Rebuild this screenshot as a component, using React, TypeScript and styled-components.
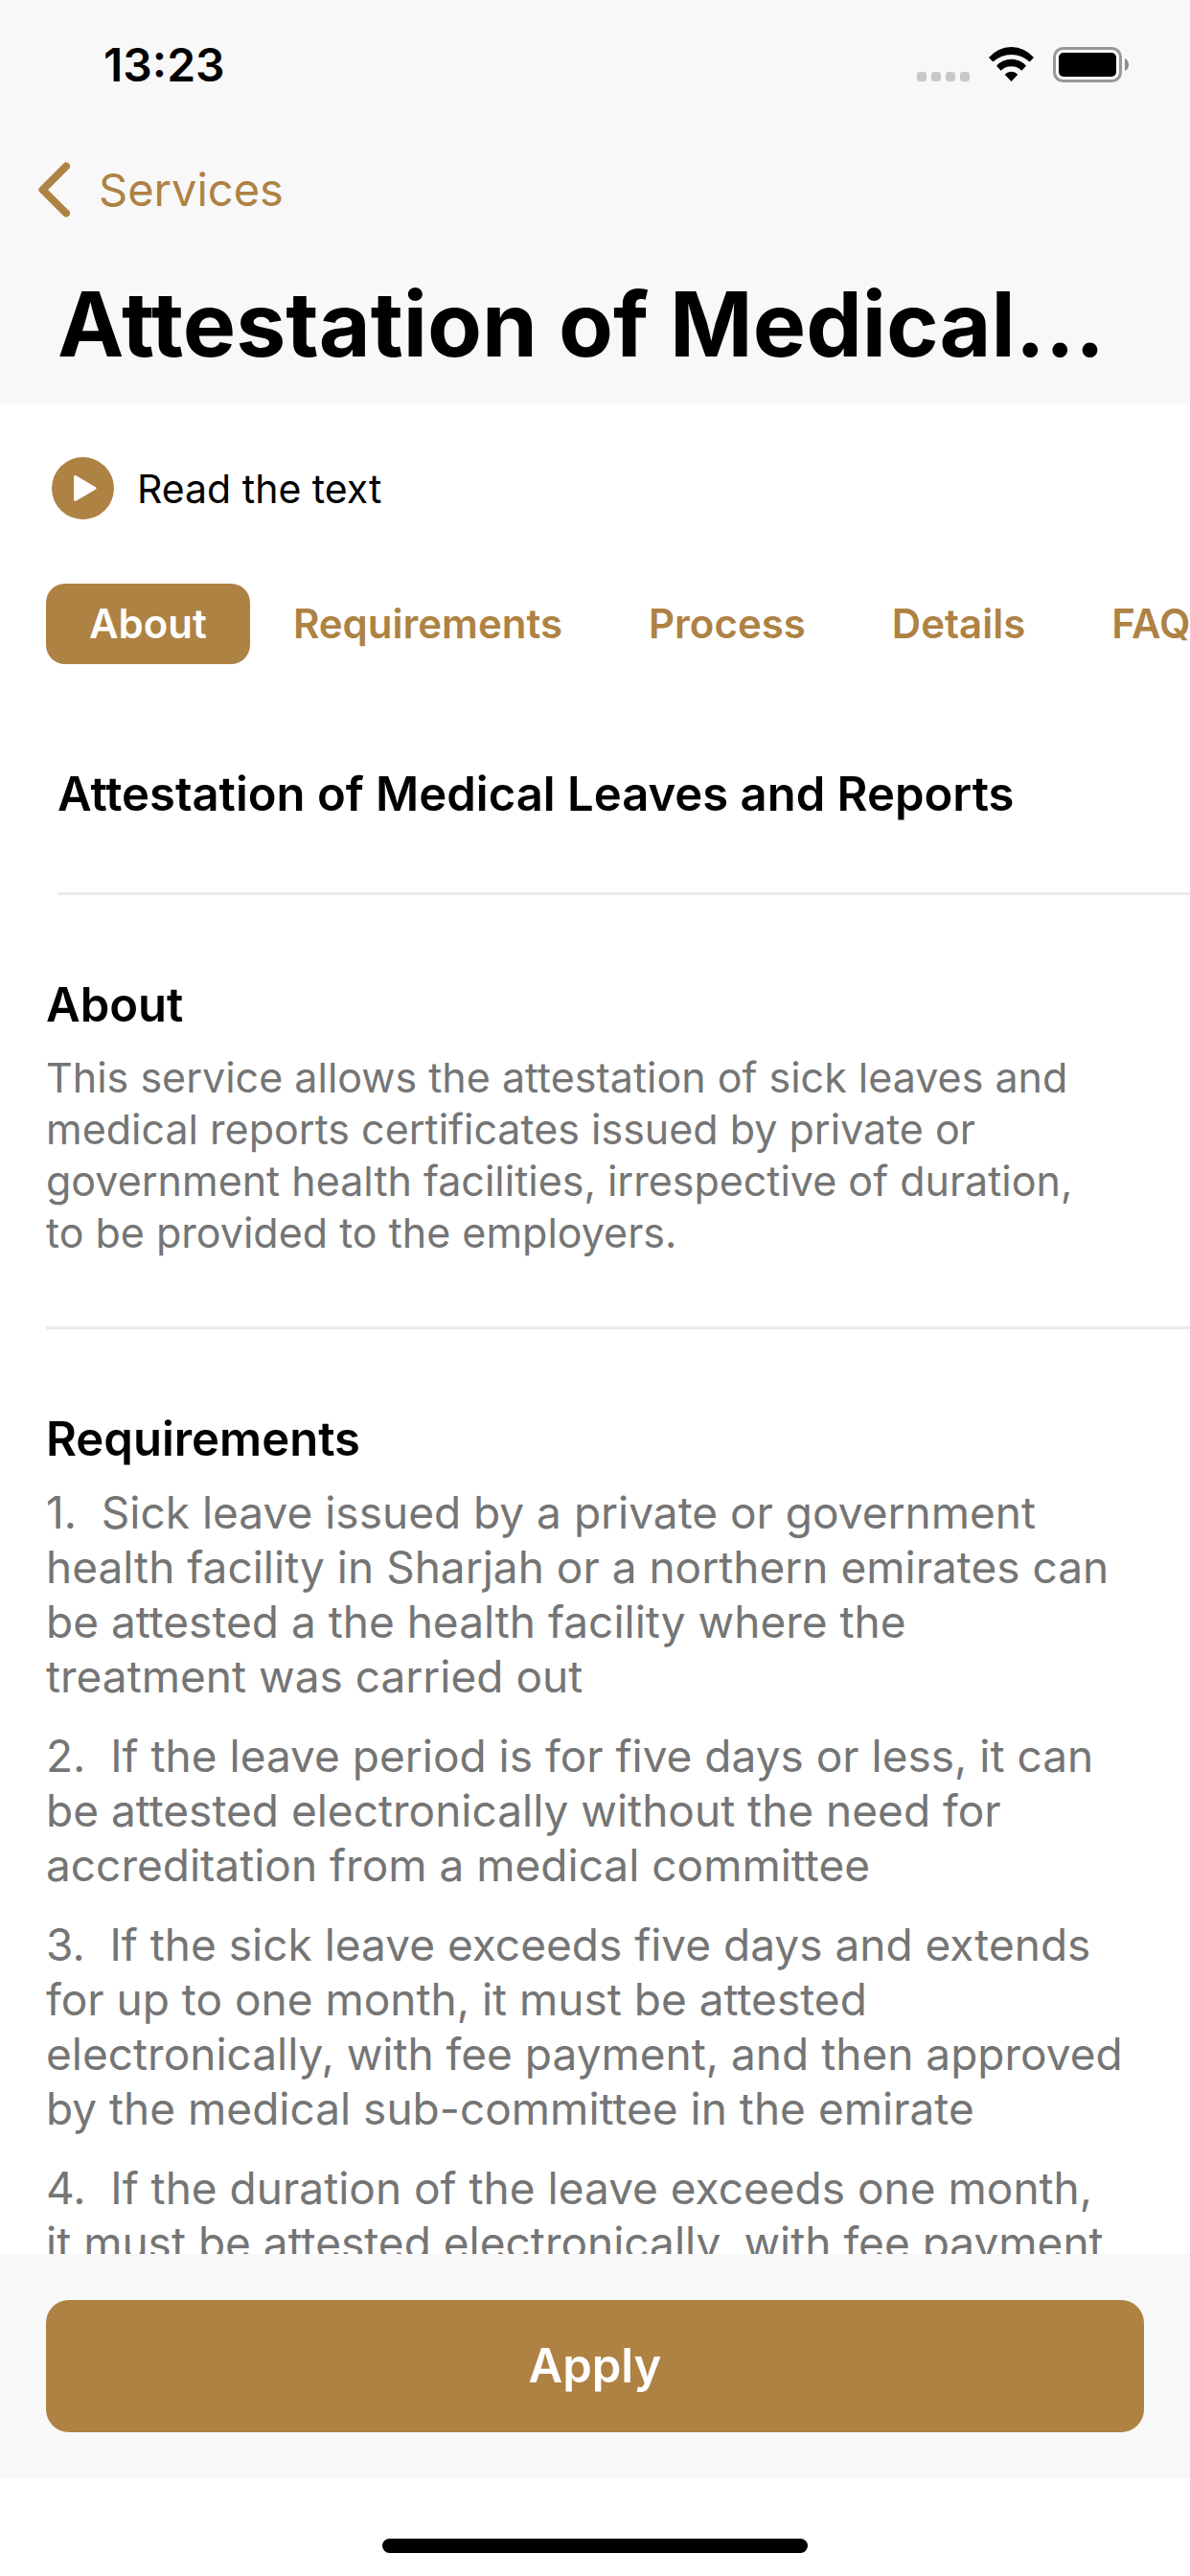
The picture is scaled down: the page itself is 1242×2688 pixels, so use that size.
import React, { useState } from "react";
import styled, { createGlobalStyle } from "styled-components";

const gold = "#ae8243";
const bar = "#f8f8f8";

const Global = createGlobalStyle`
  *, *::before, *::after { box-sizing: border-box; }
  body { margin: 0; background: #fff; }
  h1, h2, p, ol { margin: 0; padding: 0; font-weight: inherit; font-size: inherit; }
  button { font: inherit; border: 0; background: none; padding: 0; cursor: pointer; }
`;

const Screen = styled.div`
  height: 100vh;
  display: flex;
  flex-direction: column;
  overflow: hidden;
  background: #fff;
  color: #000;
  font-family: Inter, "Liberation Sans", sans-serif;
`;

const Header = styled.header`
  flex: none;
  background: ${bar};
  padding-bottom: 23px;
`;

const StatusBar = styled.div`
  display: flex;
  align-items: center;
  justify-content: space-between;
  height: 136px;
  padding: 0 63px 0 108px;
`;

const Clock = styled.time`
  font-size: 48px;
  line-height: 56px;
  font-weight: 600;
`;

const BackLink = styled.a`
  display: flex;
  align-items: center;
  gap: 30px;
  width: fit-content;
  height: 124px;
  padding-left: 40px;
  color: ${gold};
  font-size: 47px;
  line-height: 64px;
  text-decoration: none;
`;

const Title = styled.h1`
  padding: 18px 60px 0;
  font-size: 93px;
  line-height: 120px;
  font-weight: 700;
  white-space: nowrap;
`;

const Content = styled.main`
  flex: 1;
  min-height: 0;
  overflow-x: hidden;
  overflow-y: auto;
  scrollbar-width: none;
`;

const ReadButton = styled.button`
  display: flex;
  align-items: center;
  gap: 24px;
  margin: 56px 0 0 54px;
  color: #000;
  font-size: 41px;
  line-height: 52px;
`;

const Tabs = styled.nav`
  display: flex;
  margin-top: 67px;
  padding-left: 48px;
  overflow: hidden;
`;

const Tab = styled.button<{ $active: boolean }>`
  flex: none;
  height: 84px;
  padding: 0 45px;
  border-radius: 20px;
  font-size: 42px;
  line-height: 52px;
  font-weight: 600;
  color: ${(p) => (p.$active ? "#fff" : gold)};
  background: ${(p) => (p.$active ? gold : "transparent")};
`;

const ServiceName = styled.h2`
  margin-left: 60px;
  padding: 104px 0 70px;
  border-bottom: 3px solid #eaeaea;
  font-size: 49px;
  line-height: 64px;
  font-weight: 600;
`;

const Section = styled.section`
  margin-left: 48px;
  padding: 83px 66px 71px 0;
  color: #757575;
  & + & { border-top: 3px solid #eaeaea; }
`;

const SectionTitle = styled.h2`
  margin-bottom: 16px;
  color: #000;
  font-size: 49px;
  line-height: 64px;
  font-weight: 600;
`;

const Paragraph = styled.p`
  padding-right: 24px;
  font-size: 43px;
  line-height: 54px;
`;

const Steps = styled.ol`
  display: flex;
  flex-direction: column;
  gap: 26px;
  list-style: none;
  font-size: 46px;
  line-height: 57px;
`;

const Step = styled.li`
  white-space: pre-wrap;
`;

const Footer = styled.footer`
  flex: none;
  padding: 48px;
  background: ${bar};
`;

const ApplyButton = styled.button`
  display: block;
  width: 100%;
  height: 138px;
  border-radius: 24px;
  background: ${gold};
  color: #fff;
  font-size: 49px;
  line-height: 64px;
  font-weight: 600;
`;

const HomeArea = styled.div`
  flex: none;
  display: flex;
  justify-content: center;
  align-items: flex-end;
  height: 102px;
  padding-bottom: 24px;
`;

const HomeIndicator = styled.div`
  width: 444px;
  height: 15px;
  border-radius: 8px;
  background: #000;
`;

const StatusIcons = () => (
  <svg width="222" height="38" viewBox="0 0 222 38" aria-hidden="true">
    {[0, 15, 30, 45].map((x) => (
      <rect key={x} x={x} y="26" width="10" height="10" rx="3" fill="#c8c8c8" />
    ))}
    <path d="M75 11A30.600 30.600 0 0 1 122 11L117.700 15.500A28.300 28.300 0 0 0 79.300 15.500Z" />
    <path d="M83 19.700A20.600 20.600 0 0 1 114 19.700L109.300 24.700A15.500 15.500 0 0 0 87.700 24.700Z" />
    <path d="M91.700 28.700A9.200 9.200 0 0 1 105.300 28.700L98.500 36Z" />
    <rect x="143.500" y="1.500" width="69" height="34" rx="9" fill="none" stroke="#979797" strokeWidth="3" />
    <rect x="148" y="6" width="60" height="25" rx="5" />
    <path d="M217 12C222.300 14 222.300 23 217 25Z" fill="#8c8c8c" />
  </svg>
);

const Chevron = () => (
  <svg width="33" height="58" viewBox="0 0 33 58" fill="none" stroke={gold} strokeWidth="8" strokeLinecap="round" strokeLinejoin="round" aria-hidden="true">
    <path d="M29 4.500L4.500 29L29 53.500" />
  </svg>
);

const PlayIcon = () => (
  <svg width="65" height="65" viewBox="0 0 65 65" aria-hidden="true">
    <circle cx="32.500" cy="32.500" r="32.500" fill={gold} />
    <path d="M24.500 20.500L45 32.500L24.500 44.500Z" fill="#fff" stroke="#fff" strokeWidth="3" strokeLinejoin="round" />
  </svg>
);

const tabs = ["About", "Requirements", "Process", "Details", "FAQ"];

const requirements = [
  "Sick leave issued by a private or government health facility in Sharjah or a northern emirates can be attested a the health facility where the\ntreatment was carried out",
  "If the leave period is for five days or less, it can be attested electronically without the need for accreditation from a medical committee",
  "If the sick leave exceeds five days and extends for up to one month, it must be attested electronically, with fee payment, and then approved by the medical sub-committee in the emirate",
  "If the duration of the leave exceeds one month, it must be attested electronically, with fee payment",
];

export default function App() {
  const [active, setActive] = useState("About");
  return (
    <Screen>
      <Global />
      <Header>
        <StatusBar>
          <Clock>13:23</Clock>
          <StatusIcons />
        </StatusBar>
        <BackLink href="#services">
          <Chevron />
          Services
        </BackLink>
        <Title>Attestation of Medical...</Title>
      </Header>
      <Content>
        <ReadButton type="button">
          <PlayIcon />
          Read the text
        </ReadButton>
        <Tabs aria-label="Sections">
          {tabs.map((t) => (
            <Tab key={t} type="button" $active={t === active} onClick={() => setActive(t)}>
              {t}
            </Tab>
          ))}
        </Tabs>
        <ServiceName>Attestation of Medical Leaves and Reports</ServiceName>
        <Section>
          <SectionTitle>About</SectionTitle>
          <Paragraph>
            This service allows the attestation of sick leaves and medical reports certificates issued by
            private or government health facilities, irrespective of duration, to be provided to the
            employers.
          </Paragraph>
        </Section>
        <Section>
          <SectionTitle>Requirements</SectionTitle>
          <Steps>
            {requirements.map((text, i) => (
              <Step key={i}>{`${i + 1}.  ${text}`}</Step>
            ))}
          </Steps>
        </Section>
      </Content>
      <Footer>
        <ApplyButton type="button">Apply</ApplyButton>
      </Footer>
      <HomeArea>
        <HomeIndicator />
      </HomeArea>
    </Screen>
  );
}
